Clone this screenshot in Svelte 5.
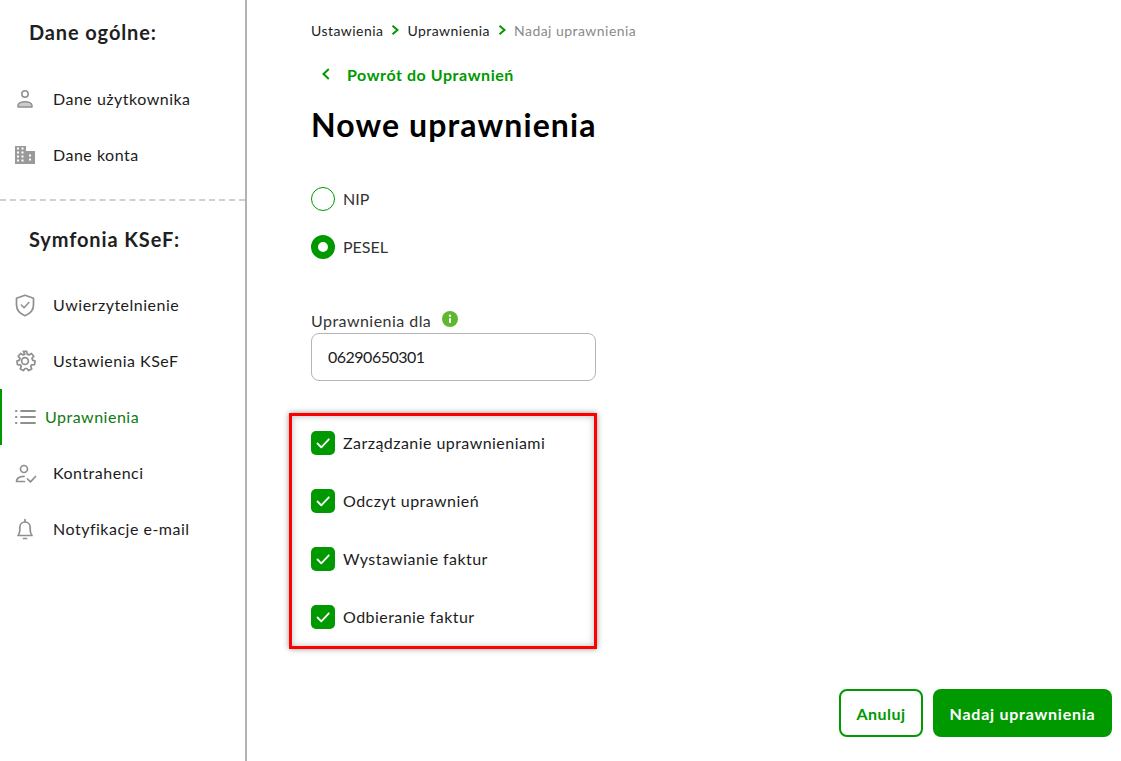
<script>
  const general = [
    { label: "Dane użytkownika", icon: "person" },
    { label: "Dane konta", icon: "building" }
  ];
  const ksef = [
    { label: "Uwierzytelnienie", icon: "shield" },
    { label: "Ustawienia KSeF", icon: "gear" },
    { label: "Uprawnienia", icon: "list", active: true },
    { label: "Kontrahenci", icon: "personCheck" },
    { label: "Notyfikacje e-mail", icon: "bell" }
  ];
  const permissions = [
    "Zarządzanie uprawnieniami",
    "Odczyt uprawnień",
    "Wystawianie faktur",
    "Odbieranie faktur"
  ];

  let idType = $state("PESEL");
  let person = $state("06290650301");
  let checked = $state(permissions.map(() => true));
</script>

{#snippet icon(name)}
  <svg class="nav-icon" viewBox="0 0 24 24" fill="none" stroke="#8f8f8f" stroke-width="1.500" stroke-linecap="round" stroke-linejoin="round">
    {#if name === "person"}
      <circle cx="12" cy="7" r="3.200" />
      <path d="M5 20v-1.500c0-2.500 3.500-3.800 7-3.800s7 1.300 7 3.800V20z" fill="#8f8f8f" fill-opacity="0.45" />
    {:else if name === "building"}
      <path d="M2 3h11v5h9v13H2z" fill="#9a9a9a" stroke="none" />
      <path d="M4 5.500h2M8.500 5.500h2M4 9.500h2M8.500 9.500h2M4 13.500h2M8.500 13.500h2M4 17.500h2M8.500 17.500h2M16 12.500h2M16 16.500h2" stroke="#fff" stroke-width="1.800" stroke-linecap="butt" />
    {:else if name === "shield"}
      <path d="M12 2.200l8.500 3.100v6.400c0 5.200-3.600 9-8.500 11-4.900-2-8.500-5.800-8.500-11V5.300z" stroke-width="1.700" />
      <path d="M8.300 12l2.700 2.700 4.900-5.200" />
    {:else if name === "gear"}
      <circle cx="12" cy="12" r="3.400" stroke-width="1.700" />
      <path d="M10.300 2.300h3.400l.5 2.800 1.800.8 2.400-1.400 2.400 2.700-1.800 2.200.5 1.700 2.600 1-.6 3.500-2.800.2-1 1.500 1 2.600-3 1.700-1.800-2.100h-1.800l-1.800 2.100-3-1.700 1-2.600-1-1.500-2.800-.2-.6-3.500 2.600-1 .5-1.700-1.800-2.200 2.400-2.700 2.400 1.400 1.800-.8z" stroke-width="1.700" />
    {:else if name === "list"}
      <path d="M8 6h14M8 12h14M8 18h14" stroke-width="1.800" />
      <path d="M3 6h.4M3 12h.4M3 18h.4" stroke-width="2.200" />
    {:else if name === "personCheck"}
      <circle cx="11" cy="8" r="3.500" stroke-width="1.700" />
      <path d="M3.500 20.500c0-3.200 2.500-5 7.500-5.200M3.500 20.500h8" stroke-width="1.700" />
      <path d="M14.500 18l3 2.800 5-5.300" stroke-width="1.700" />
    {:else if name === "bell"}
      <path d="M5 18.500h14c-1.300-1.500-1.800-3-1.800-5.500v-2.500c0-3.200-2.200-5.500-5.200-5.500s-5.200 2.300-5.200 5.500V13c0 2.500-.5 4-1.800 5.500z" stroke-width="1.700" />
      <path d="M12 2.500V5M10.500 21.500h3" stroke-width="1.700" />
    {/if}
  </svg>
{/snippet}

{#snippet navList(items)}
  <ul class="nav-list">
    {#each items as item}
      <li class="nav-item" class:active={item.active}>
        {@render icon(item.icon)}
        <span>{item.label}</span>
      </li>
    {/each}
  </ul>
{/snippet}

<div class="page">
  <aside class="sidebar">
    <section class="side-top">
      <h2>Dane ogólne:</h2>
      {@render navList(general)}
    </section>
    <section class="side-bottom">
      <h2>Symfonia KSeF:</h2>
      {@render navList(ksef)}
    </section>
  </aside>

  <main class="content">
    <nav class="crumbs">
      <span>Ustawienia</span>
      <svg viewBox="0 0 8 10" class="crumb-sep"><path d="M1.500 .8L6.500 5l-5 4.200" /></svg>
      <span>Uprawnienia</span>
      <svg viewBox="0 0 8 10" class="crumb-sep"><path d="M1.500 .8L6.500 5l-5 4.200" /></svg>
      <span class="current">Nadaj uprawnienia</span>
    </nav>

    <a class="back" href="#back">
      <svg viewBox="0 0 8 12"><path d="M6.800 1L1.500 6l5.300 5" /></svg>
      Powrót do Uprawnień
    </a>

    <h1>Nowe uprawnienia</h1>

    <div class="radios">
      {#each ["NIP", "PESEL"] as option}
        <label class="radio">
          <input type="radio" name="idType" value={option} bind:group={idType} />
          <span class="radio-mark"></span>
          <span class="radio-label">{option}</span>
        </label>
      {/each}
    </div>

    <div class="field">
      <div class="field-label">
        <label for="person">Uprawnienia dla</label>
        <svg viewBox="0 0 16 16" class="info">
          <circle cx="8" cy="8" r="8" fill="#5eb82e" />
          <rect x="7" y="7" width="2" height="5" rx="0.800" fill="#fff" />
          <circle cx="8" cy="4.700" r="1.200" fill="#fff" />
        </svg>
      </div>
      <input id="person" type="text" bind:value={person} />
    </div>

    <div class="permissions">
      {#each permissions as name, i}
        <label class="check">
          <input type="checkbox" bind:checked={checked[i]} />
          <span class="check-mark">
            <svg viewBox="0 0 24 24"><path d="M6.500 12.500l3.800 3.800 7.500-8" /></svg>
          </span>
          <span class="check-label">{name}</span>
        </label>
      {/each}
    </div>

    <div class="actions">
      <button type="button" class="btn ghost">Anuluj</button>
      <button type="button" class="btn primary">Nadaj uprawnienia</button>
    </div>
  </main>
</div>

<style>
  :global(body) {
    font-family: "Lato", "Noto Sans", sans-serif;
    color: #1c1c1c;
    background: #fff;
  }

  .page {
    display: flex;
    min-height: 761px;
  }

  /* Sidebar */
  .sidebar {
    width: 245px;
    flex-shrink: 0;
    border-right: 2px solid #b3b3b3;
  }

  .side-top {
    padding-top: 19px;
    height: 201px;
    box-sizing: border-box;
    border-bottom: 2px dashed #d0d0d0;
  }

  .side-bottom {
    padding-top: 25px;
  }

  h2 {
    margin: 0;
    padding-left: 29px;
    font-size: 20px;
    line-height: 26px;
    font-weight: 700;
    letter-spacing: 0.88px;
    color: #1f1f1f;
  }

  .nav-list {
    list-style: none;
    margin: 25px 0 0;
    padding: 0;
  }

  .side-top .nav-list {
    margin-top: 26px;
  }

  .nav-item {
    display: flex;
    align-items: center;
    height: 56px;
    padding-left: 13px;
    gap: 16px;
    font-size: 16px;
    letter-spacing: 0.5px;
  }

  .nav-item span {
    padding-bottom: 2px;
  }

  .nav-item.active {
    gap: 8px;
    color: #0f7a0f;
    box-shadow: inset 2px 0 0 #009900;
  }

  .nav-icon {
    width: 24px;
    height: 24px;
    flex-shrink: 0;
  }

  /* Main column */
  .content {
    flex: 1;
    display: flex;
    flex-direction: column;
    align-items: flex-start;
    padding: 21px 9px 24px 64px;
    box-sizing: border-box;
  }

  .crumbs {
    display: flex;
    align-items: center;
    height: 18px;
    font-size: 14px;
    letter-spacing: 0.46px;
    gap: 8px;
  }

  .crumb-sep {
    width: 8px;
    height: 10px;
  }

  .crumb-sep path {
    fill: none;
    stroke: #009900;
    stroke-width: 2;
  }

  .current {
    color: #8a8a8a;
  }

  .back {
    display: flex;
    align-items: center;
    gap: 17px;
    margin: 25px 0 0 11px;
    height: 20px;
    font-size: 16px;
    font-weight: 700;
    letter-spacing: 0.56px;
    color: #009900;
    text-decoration: none;
  }

  .back svg {
    width: 8px;
    height: 12px;
  }

  .back path {
    fill: none;
    stroke: #009900;
    stroke-width: 2;
  }

  h1 {
    margin: 21px 0 0;
    font-size: 32px;
    line-height: 40px;
    font-weight: 700;
    letter-spacing: 1.1px;
    color: #000;
  }

  .radios {
    display: flex;
    flex-direction: column;
    gap: 24px;
    margin-top: 42px;
  }

  .radio {
    display: flex;
    align-items: center;
    gap: 8px;
    height: 24px;
    font-size: 16px;
    color: #333;
  }

  .radio-label {
    padding-bottom: 2px;
  }

  .radio input,
  .check input {
    display: none;
  }

  .radio-mark {
    width: 24px;
    height: 24px;
    box-sizing: border-box;
    border-radius: 50%;
    border: 1px solid #009900;
  }

  .radio input:checked + .radio-mark {
    border: 7.5px solid #009900;
  }

  .field {
    margin-top: 50px;
  }

  .field-label {
    display: flex;
    align-items: center;
    gap: 11px;
    height: 24px;
    font-size: 16px;
    letter-spacing: 0.46px;
    color: #333;
  }

  .field-label label {
    padding-bottom: 2px;
  }

  .info {
    width: 16px;
    height: 16px;
    margin-top: -4px;
  }

  #person {
    display: block;
    width: 285px;
    height: 48px;
    margin-top: 0;
    padding: 0 16px 2px;
    box-sizing: border-box;
    border: 1px solid #b5b5b5;
    border-radius: 8px;
    font: inherit;
    font-size: 16px;
    letter-spacing: -0.5px;
    color: #1c1c1c;
    outline: none;
  }

  .permissions {
    display: flex;
    flex-direction: column;
    gap: 34px;
    width: 308px;
    box-sizing: border-box;
    margin: 32px 0 0 -22px;
    padding: 15px 19px 17px 19px;
    border: 3px solid #ff0000;
    box-shadow: 0 0 6px rgba(0, 0, 0, 0.4), inset 0 0 7px rgba(0, 0, 0, 0.25);
  }

  .check {
    display: flex;
    align-items: center;
    gap: 8px;
    height: 24px;
    font-size: 16px;
    letter-spacing: 0.45px;
  }

  .check-label {
    padding-bottom: 2px;
  }

  .check-mark {
    width: 24px;
    height: 24px;
    border-radius: 5px;
    background: #009900;
    display: flex;
  }

  .check-mark path {
    fill: none;
    stroke: #fff;
    stroke-width: 1.800;
    stroke-linecap: round;
    stroke-linejoin: round;
  }

  .actions {
    display: flex;
    justify-content: flex-end;
    gap: 10px;
    align-self: stretch;
    margin-top: auto;
  }

  .btn {
    height: 48px;
    border-radius: 8px;
    font: inherit;
    font-size: 16px;
    font-weight: 700;
    letter-spacing: 0.75px;
    cursor: pointer;
    box-sizing: border-box;
  }

  .ghost {
    width: 84px;
    background: #fff;
    border: 2px solid #009900;
    color: #009900;
    letter-spacing: 0.5px;
  }

  .primary {
    width: 179px;
    background: #009900;
    border: none;
    color: #fff;
  }
</style>
